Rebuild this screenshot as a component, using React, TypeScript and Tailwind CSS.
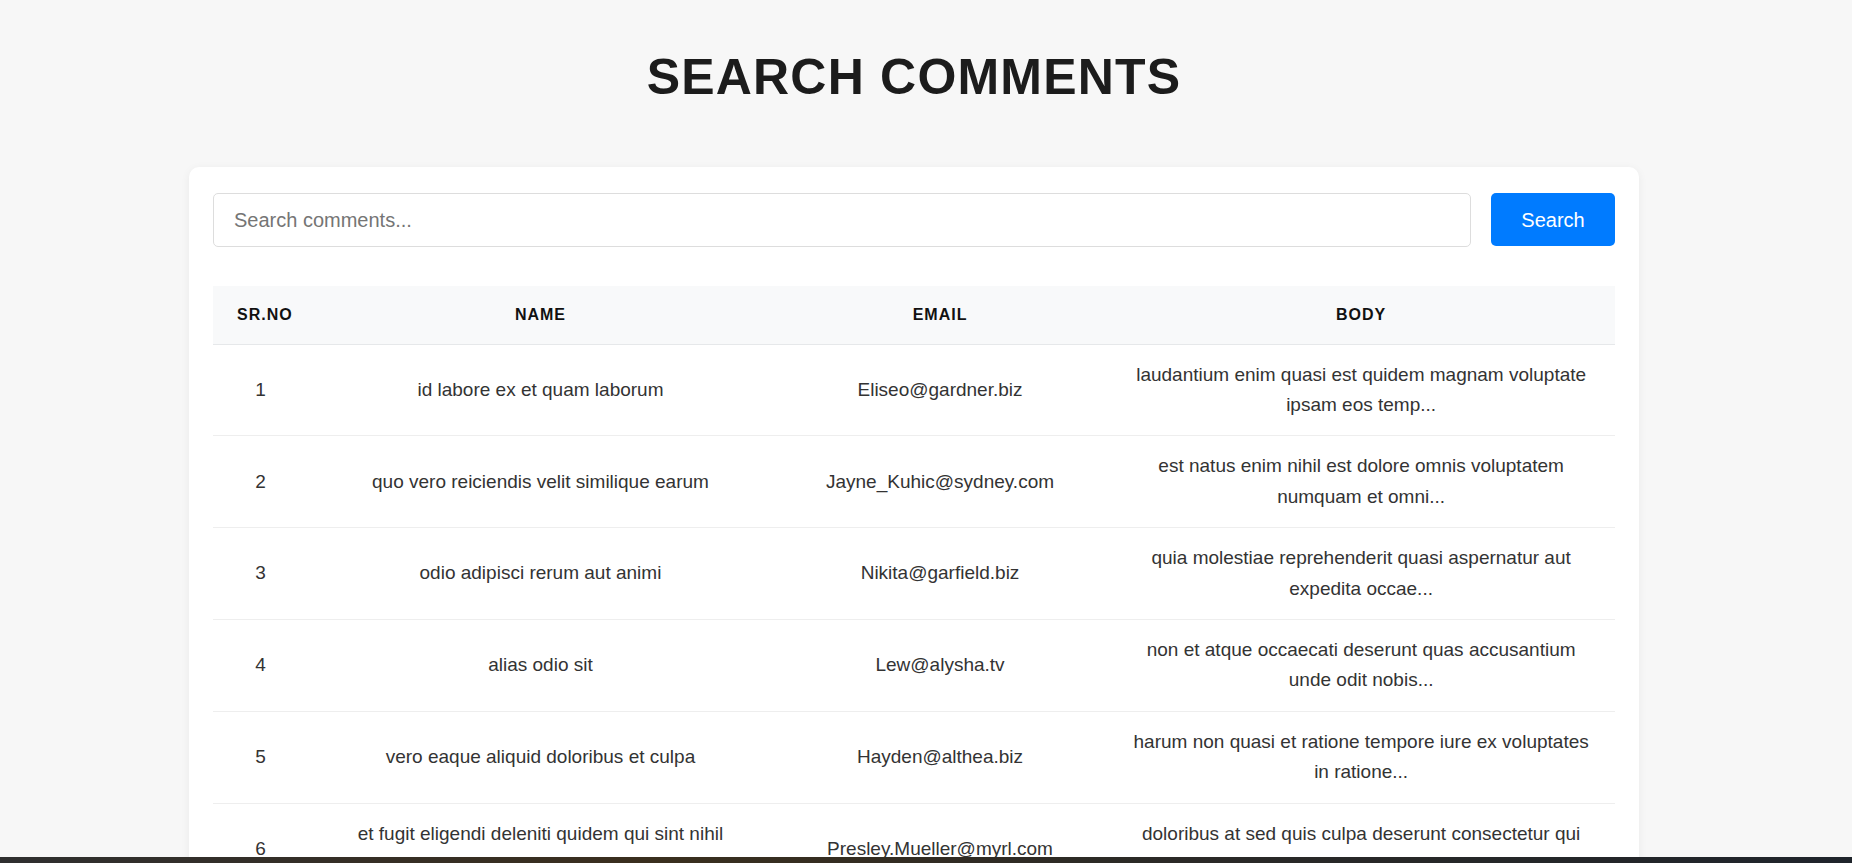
import { useState } from "react";

type Comment = {
  id: number;
  name: string;
  email: string;
  body: string;
};

const COMMENTS: Comment[] = [
  {
    id: 1,
    name: "id labore ex et quam laborum",
    email: "Eliseo@gardner.biz",
    body: "laudantium enim quasi est quidem magnam voluptate ipsam eos temp...",
  },
  {
    id: 2,
    name: "quo vero reiciendis velit similique earum",
    email: "Jayne_Kuhic@sydney.com",
    body: "est natus enim nihil est dolore omnis voluptatem numquam et omni...",
  },
  {
    id: 3,
    name: "odio adipisci rerum aut animi",
    email: "Nikita@garfield.biz",
    body: "quia molestiae reprehenderit quasi aspernatur aut expedita occae...",
  },
  {
    id: 4,
    name: "alias odio sit",
    email: "Lew@alysha.tv",
    body: "non et atque occaecati deserunt quas accusantium unde odit nobis...",
  },
  {
    id: 5,
    name: "vero eaque aliquid doloribus et culpa",
    email: "Hayden@althea.biz",
    body: "harum non quasi et ratione tempore iure ex voluptates in ratione...",
  },
  {
    id: 6,
    name: "et fugit eligendi deleniti quidem qui sint nihil autem",
    email: "Presley.Mueller@myrl.com",
    body: "doloribus at sed quis culpa deserunt consectetur qui praesentium...",
  },
  {
    id: 7,
    name: "repellat consequatur praesentium vel minus molestias voluptatum",
    email: "Dallas@ole.me",
    body: "maiores sed dolores similique labore et inventore et quasi tempo...",
  },
  {
    id: 8,
    name: "et omnis dolorem",
    email: "Mallory_Kunze@marie.org",
    body: "ut voluptatem corrupti velit ad voluptatem maiores et nisi velit...",
  },
];

const App = () => {
  const [query, setQuery] = useState("");

  const Title = (
    <h1 className="text-center text-[50px] leading-[60px] font-bold tracking-[1.2px] text-[#1c1c1c] mb-[60px]">
      SEARCH COMMENTS
    </h1>
  );

  const SearchBar = (
    <div className="flex items-start gap-[20px]">
      <input
        type="text"
        value={query}
        onChange={(e) => setQuery(e.target.value)}
        placeholder="Search comments..."
        className="flex-1 h-[54px] px-[20px] text-[20px] text-[#333] placeholder:text-[#757575] border border-[#dddddd] rounded-[5px] outline-none bg-white"
      />
      <button
        type="button"
        className="w-[124px] h-[53px] rounded-[5px] bg-[#007bff] text-white text-[20px] hover:bg-[#0069d9] transition-all"
      >
        Search
      </button>
    </div>
  );

  const Table = (
    <table className="w-full table-fixed border-collapse mt-[39px]">
      <colgroup>
        <col className="w-[95px]" />
        <col className="w-[464px]" />
        <col className="w-[334px]" />
        <col className="w-[507px]" />
      </colgroup>
      <thead>
        <tr className="bg-[#f8f9fa] border-b border-[#e6e8ea]">
          {["Sr.No", "Name", "Email", "Body"].map((label) => (
            <th
              key={label}
              className="px-6 py-4 text-[16px] leading-[1.6] font-bold uppercase tracking-[1px] text-[#111] text-center"
            >
              {label}
            </th>
          ))}
        </tr>
      </thead>
      <tbody>
        {COMMENTS.map((c) => (
          <tr key={c.id} className="border-b border-[#eeeeee]">
            <td className="px-6 py-[15px] text-center">{c.id}</td>
            <td className="px-6 py-[15px] text-center">{c.name}</td>
            <td className="px-6 py-[15px] text-center">{c.email}</td>
            <td className="px-6 py-[15px] text-center">{c.body}</td>
          </tr>
        ))}
      </tbody>
    </table>
  );

  return (
    <div className="min-h-screen bg-[#f7f7f7] pt-[47px] pr-[24px] pb-10 font-['Liberation_Sans',Arial,sans-serif]">
      {Title}
      <div className="max-w-[1450px] mx-auto bg-white rounded-[10px] shadow-[0_2px_10px_rgba(0,0,0,0.06)] pt-[26px] px-[24px] pb-[24px] text-[19px] leading-[1.6] text-[#333]">
        {SearchBar}
        {Table}
      </div>
      <div className="fixed left-0 right-0 bottom-0 h-[6px] bg-[linear-gradient(90deg,#2f2f2f_0%,#3a2f1e_35%,#2c2a26_60%,#1f242b_100%)]" />
    </div>
  );
};

export default App;
